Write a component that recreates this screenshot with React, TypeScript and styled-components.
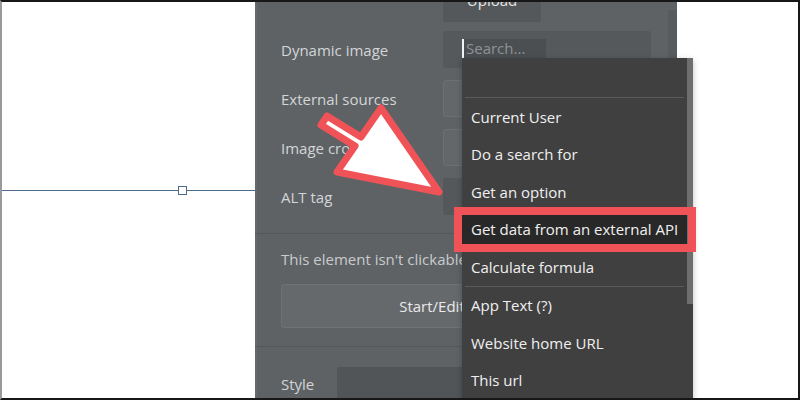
import React from "react";
import styled, { createGlobalStyle, css } from "styled-components";

const Global = createGlobalStyle`
  html, body { margin: 0; padding: 0; background: #ffffff; }
  body { font-family: "Open Sans", "Liberation Sans", sans-serif; }
  * { box-sizing: border-box; }
`;

const Frame = styled.div`
  position: relative;
  width: 800px;
  height: 400px;
  border: 2px solid #171717;
  border-left-color: #9a9a9a;
  background: #ffffff;
  display: flex;
  overflow: hidden;
`;

const Canvas = styled.div`
  position: relative;
  flex: 0 0 253px;
  background: #ffffff;
`;

const GuideLine = styled.div`
  position: absolute;
  left: 0;
  right: 0;
  top: 188px;
  height: 1px;
  background: #4d6c8c;
`;

const Handle = styled.div`
  position: absolute;
  left: 176px;
  top: 184px;
  width: 9px;
  height: 9px;
  border: 1px solid #4d6c8c;
  background: #ffffff;
`;

const Panel = styled.div`
  position: relative;
  flex: 0 0 422px;
  background: #5e6265;
  display: flex;
  flex-direction: column;
  box-shadow: inset 2px 0 0 #65696c;
`;

const PanelScroll = styled.div`
  position: absolute;
  right: 0;
  top: 8px;
  bottom: 0;
  width: 9px;
  background: rgba(0, 0, 0, 0.07);
`;

const Section = styled.div<{ $pt: number; $pb: number; $line?: boolean }>`
  display: flex;
  flex-direction: column;
  padding: ${(p) => p.$pt}px 26px ${(p) => p.$pb}px 26px;
  ${(p) =>
    p.$line &&
    css`
      border-bottom: 1px solid #54585b;
    `}
`;

const Row = styled.div<{ $mt?: number; $labelW?: number }>`
  display: flex;
  align-items: center;
  margin-top: ${(p) => p.$mt ?? 0}px;
  padding-left: ${(p) => (p.$labelW === 0 ? 162 : 0)}px;
`;

const Label = styled.div<{ $w: number }>`
  flex: 0 0 ${(p) => p.$w}px;
  font-size: 15px;
  color: #d3d5d7;
  white-space: nowrap;
`;

const UploadButton = styled.div`
  width: 98px;
  height: 33px;
  border-radius: 3px;
  background: #54585b;
  color: #e6e6e6;
  font-size: 15px;
  display: flex;
  align-items: center;
  justify-content: center;
  padding-bottom: 11px;
`;

const DynamicBox = styled.div`
  flex: 1;
  height: 37px;
  border-radius: 3px;
  background: #55595c;
  padding: 8px 0 0 19px;
`;

const SearchWrap = styled.div`
  position: relative;
  width: 84px;
  height: 19px;
`;

const SearchInput = styled.div`
  width: 84px;
  height: 19px;
  background: #4b4f52;
  color: #8f9295;
  font-size: 15px;
  line-height: 19px;
  padding-left: 2px;
  display: flex;
  align-items: center;
  border-left: 2px solid #f2f2f2;
  overflow: hidden;
  white-space: nowrap;
`;

const Box = styled.div<{ $tone: "light" | "dark" }>`
  width: 110px;
  height: 37px;
  border-radius: 3px;
  ${(p) =>
    p.$tone === "light"
      ? css`
          background: #63676a;
          border: 1px solid #6c7073;
        `
      : css`
          background: #54585b;
        `}
`;

const Note = styled.div`
  font-size: 15px;
  line-height: 20px;
  color: #c9cbcd;
  white-space: nowrap;
`;

const WideButton = styled.div`
  margin-top: 15px;
  height: 44px;
  border-radius: 3px;
  background: #65696c;
  border: 1px solid #6e7275;
  color: #eaeaea;
  font-size: 15px;
  display: flex;
  align-items: center;
  justify-content: center;
`;

const StyleBox = styled.div`
  flex: 1;
  height: 34px;
  border-radius: 3px;
  background: #515558;
`;

const Right = styled.div`
  flex: 1;
  background: #ffffff;
`;

const Dropdown = styled.div`
  position: absolute;
  top: 100%;
  left: 0;
  width: 231px;
  height: 342px;
  background: #404040;
  padding-right: 6px;
  z-index: 5;
  box-shadow: 0 2px 6px rgba(0, 0, 0, 0.25);
`;

const Thumb = styled.div`
  position: absolute;
  top: 0;
  right: 0;
  width: 6px;
  height: 246px;
  background: #6e6e6e;
  z-index: 1;
`;

const Spacer = styled.div`
  height: 39px;
`;

const Divider = styled.div`
  height: 1px;
  margin: 0 3px;
  background: #5b5b5b;
`;

const Item = styled.div<{ $active?: boolean }>`
  position: relative;
  height: 37.5px;
  padding-left: 9px;
  display: flex;
  align-items: center;
  font-size: 15px;
  color: #f0f0f0;
  white-space: nowrap;
  ${(p) =>
    p.$active &&
    css`
      background: #282828;
      z-index: 2;
      &::after {
        content: "";
        position: absolute;
        top: -4px;
        bottom: -4px;
        left: -8px;
        right: -9px;
        border: 8px solid #ef5357;
      }
    `}
`;

const ArrowLayer = styled.svg`
  position: absolute;
  top: -2px;
  left: -2px;
  width: 800px;
  height: 400px;
  pointer-events: none;
  z-index: 10;
`;

const menuTop = ["Current User", "Do a search for", "Get an option"];
const menuBottom = ["App Text (?)", "Website home URL", "This url"];

export default function App() {
  return (
    <>
      <Global />
      <Frame>
        <Canvas>
          <GuideLine />
          <Handle />
        </Canvas>
        <Panel>
          <PanelScroll />
          <Section $pt={0} $pb={18} $line>
            <Row $mt={-13} $labelW={0}>
              <UploadButton>Upload</UploadButton>
            </Row>
            <Row $mt={9}>
              <Label $w={162}>Dynamic image</Label>
              <DynamicBox>
                <SearchWrap>
                  <SearchInput>Search...</SearchInput>
                  <Dropdown>
                    <Thumb />
                    <Spacer />
                    <Divider />
                    {menuTop.map((t) => (
                      <Item key={t}>{t}</Item>
                    ))}
                    <Item $active>Get data from an external API</Item>
                    <Item>Calculate formula</Item>
                    <Divider />
                    {menuBottom.map((t) => (
                      <Item key={t}>{t}</Item>
                    ))}
                  </Dropdown>
                </SearchWrap>
              </DynamicBox>
            </Row>
            <Row $mt={12}>
              <Label $w={162}>External sources</Label>
              <Box $tone="light" />
            </Row>
            <Row $mt={12}>
              <Label $w={162}>Image crop</Label>
              <Box $tone="light" />
            </Row>
            <Row $mt={12}>
              <Label $w={162}>ALT tag</Label>
              <Box $tone="dark" />
            </Row>
          </Section>
          <Section $pt={15} $pb={18} $line>
            <Note>This element isn't clickable</Note>
            <WideButton>Start/Edit workflow</WideButton>
          </Section>
          <Section $pt={20} $pb={0}>
            <Row>
              <Label $w={56}>Style</Label>
              <StyleBox />
            </Row>
          </Section>
        </Panel>
        <Right />
        <ArrowLayer viewBox="0 0 800 400">
          <polygon
            points="327,116 361,137 381,108 439,192 337,172 355,146 321,125"
            fill="#ffffff"
            stroke="#ef5357"
            strokeWidth={7}
            strokeLinejoin="round"
          />
        </ArrowLayer>
      </Frame>
    </>
  );
}
